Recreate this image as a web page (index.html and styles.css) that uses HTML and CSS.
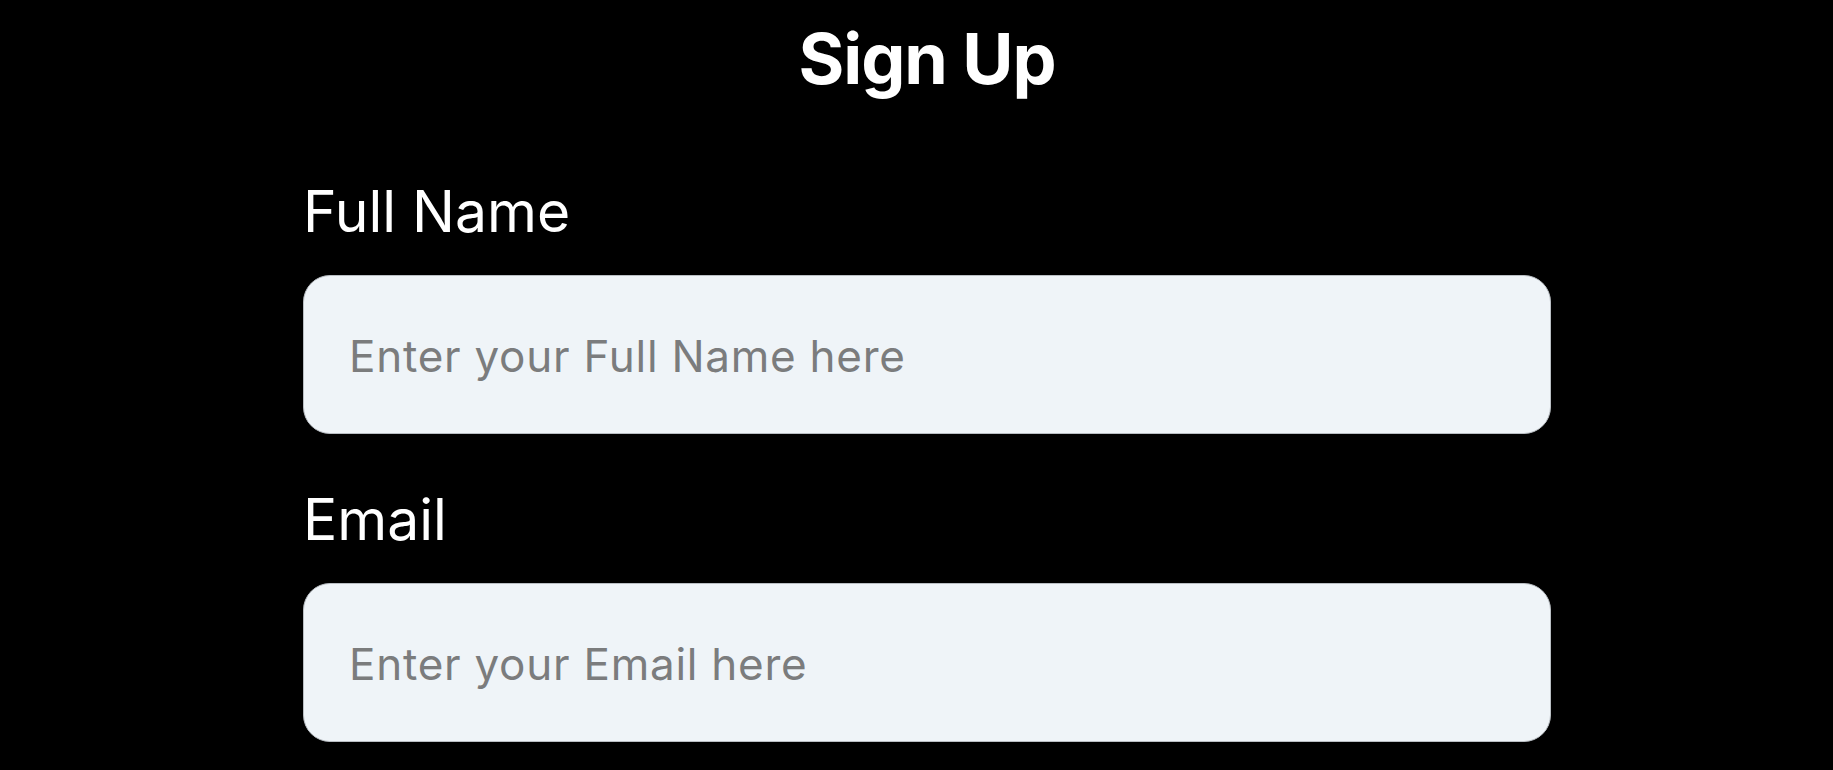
FILE: index.html
```html
<!DOCTYPE html>
<html lang="en">
<head>
<meta charset="utf-8">
<title>Sign Up</title>
<link rel="stylesheet" href="styles.css">
</head>
<body>
<main class="page">
  <form class="signup">
    <h1 class="title">Sign Up</h1>
    <div class="field">
      <label class="label" for="fullname">Full Name</label>
      <input class="input" id="fullname" type="text" placeholder="Enter your Full Name here">
    </div>
    <div class="field">
      <label class="label" for="email">Email</label>
      <input class="input" id="email" type="email" placeholder="Enter your Email here">
    </div>
  </form>
</main>
</body>
</html>
```
FILE: styles.css
```css
html, body {
  margin: 0;
  padding: 0;
  background: #000;
  height: 100%;
  overflow: hidden;
}

body {
  font-family: Inter, "Noto Sans", sans-serif;
  color: #fff;
}

.page {
  display: flex;
  justify-content: center;
  padding-left: 21px;
}

.signup {
  width: 1248px;
  display: flex;
  flex-direction: column;
  padding-top: 16px;
}

.title {
  margin: 0;
  font-size: 70px;
  font-weight: 700;
  line-height: 85px;
  letter-spacing: -1.1px;
  text-align: center;
}

.field {
  display: flex;
  flex-direction: column;
  gap: 29px;
  margin-top: 76px;
}

.field + .field {
  margin-top: 51px;
}

.label {
  font-size: 57px;
  font-weight: 400;
  line-height: 69px;
}

.input {
  box-sizing: border-box;
  height: 159px;
  width: 100%;
  margin: 0;
  padding: 2px 45px 0;
  border: 1px solid #b9bec3;
  border-radius: 27px;
  background: #eff4f8;
  font-family: Inter, "Noto Sans", sans-serif;
  font-size: 44px;
  letter-spacing: 0.75px;
  color: #222;
  outline: none;
}

.input::placeholder {
  color: #7b7c7d;
  opacity: 1;
}
```
